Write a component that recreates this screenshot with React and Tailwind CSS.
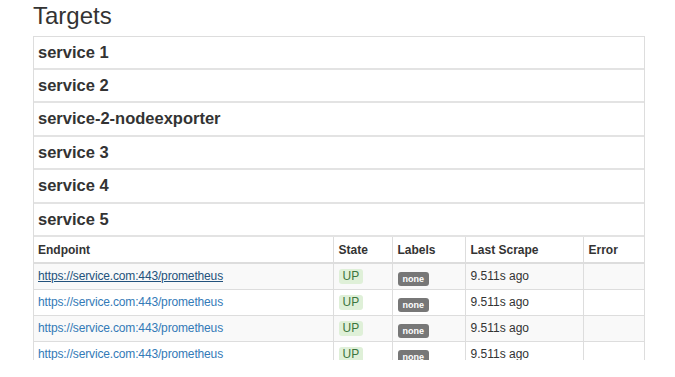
import React from 'react';

const services = ['service 1', 'service 2', 'service-2-nodeexporter', 'service 3', 'service 4'];

const rows = [
  { endpoint: 'https://service.com:443/prometheus', hover: true },
  { endpoint: 'https://service.com:443/prometheus' },
  { endpoint: 'https://service.com:443/prometheus' },
  { endpoint: 'https://service.com:443/prometheus' },
];

const App = () => {
  return (
    <div
      className="h-[360px] overflow-hidden bg-white text-[#333]"
      style={{ fontFamily: '"Liberation Sans", Arial, sans-serif' }}
    >
      <div className="pl-[33px] pr-[30px]">
        {/* Title */}
        <h1 className="mt-[3px] mb-[7px] text-[24px] leading-[26px] font-normal">Targets</h1>

        {/* Jobs panel */}
        <div className="w-[612px] border-x border-[#ddd]">
          {services.map((name, i) => (
            <div
              key={name}
              className={`flex h-[33.5px] items-center px-[4px] text-[16.5px] font-bold border-b-2 border-[#e3e3e3] ${i === 0 ? 'border-t border-t-[#ddd]' : ''}`}
            >
              {name}
            </div>
          ))}
          <div className="flex h-[33.5px] items-center px-[4px] text-[16.5px] font-bold border-b-2 border-[#e3e3e3]">
            service 5
          </div>

          {/* Targets table */}
          <table className="w-full border-collapse text-[12px]">
            <thead>
              <tr className="h-[26px] border-b-2 border-[#ddd] text-left">
                <th className="w-[299px] pl-[4px] pr-[5px] font-bold">Endpoint</th>
                <th className="w-[59px] border-l border-[#ddd] px-[5px] font-bold">State</th>
                <th className="w-[73px] border-l border-[#ddd] px-[5px] font-bold">Labels</th>
                <th className="w-[118px] border-l border-[#ddd] px-[5px] font-bold">Last Scrape</th>
                <th className="border-l border-[#ddd] px-[5px] font-bold">Error</th>
              </tr>
            </thead>
            <tbody>
              {rows.map((r, i) => (
                <tr
                  key={i}
                  className={`h-[26px] border-b border-[#ddd] ${i % 2 === 0 ? 'bg-[#f9f9f9]' : 'bg-white'}`}
                >
                  <td className="pl-[4px] pr-[5px]">
                    <a
                      href="#"
                      className={`tracking-[-0.15px] ${r.hover ? 'text-[#23527c] underline' : 'text-[#337ab7] no-underline'}`}
                    >
                      {r.endpoint}
                    </a>
                  </td>
                  <td className="border-l border-[#ddd] px-[5px]">
                    <span className="inline-block rounded-[3px] bg-[#dff0d8] px-[4px] text-[12px] leading-[15px] text-[#3c763d]">
                      UP
                    </span>
                  </td>
                  <td className="border-l border-[#ddd] px-[5px] pt-[3px]">
                    <span className="inline-block rounded-[3px] bg-[#777] px-[5px] text-[9px] leading-[14px] font-bold text-white">
                      none
                    </span>
                  </td>
                  <td className="border-l border-[#ddd] px-[5px]">9.511s ago</td>
                  <td className="border-l border-[#ddd] px-[5px]"></td>
                </tr>
              ))}
            </tbody>
          </table>
        </div>
      </div>
    </div>
  );
};

export default App;
